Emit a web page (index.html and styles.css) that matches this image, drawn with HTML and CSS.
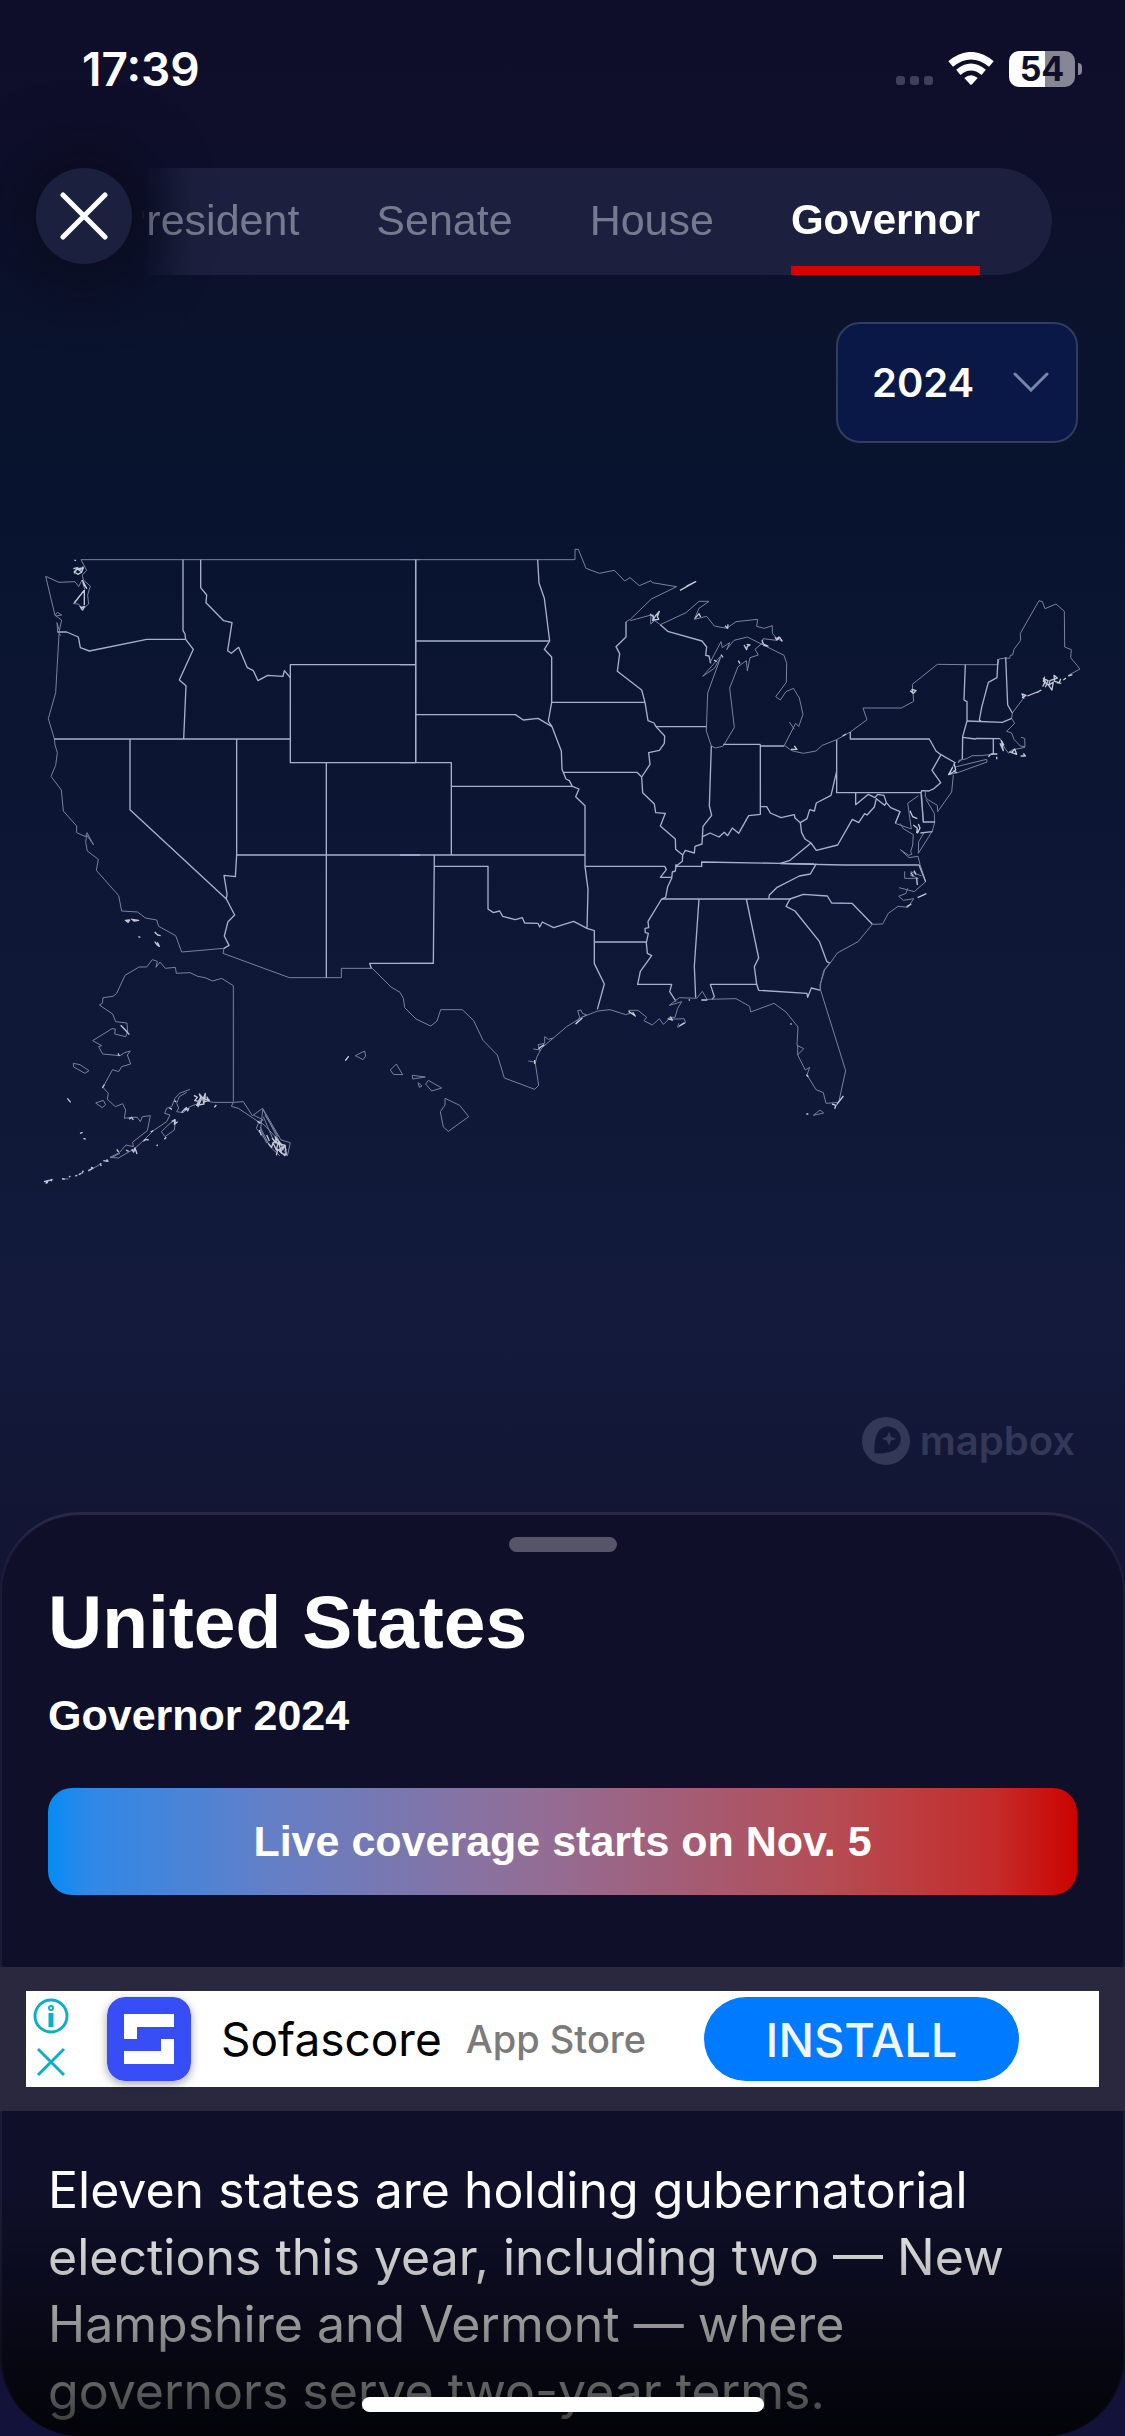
FILE: index.html
```html
<!DOCTYPE html>
<html lang="en">
<head>
    <meta charset="UTF-8">
    <meta name="viewport" content="width=device-width, initial-scale=1.0">
    <title>Election Results - Governor 2024</title>
    <link rel="stylesheet" href="styles.css">
</head>
<body>
    <div class="status-bar">
        <span class="clock">17:39</span>
        <div class="status-icons">
            <span class="signal"><i></i><i></i><i></i></span>
            <svg class="wifi" viewBox="0 0 138 100" aria-hidden="true">
                <g fill="none" stroke="#fff">
                    <path d="M8 36 Q69 -14 130 36" stroke-width="22"/>
                    <path d="M31 61 Q69 29 107 61" stroke-width="20"/>
                </g>
                <path d="M49 78 Q69 62 89 78 L72 97 Q69 100 66 97 Z" fill="#fff"/>
            </svg>
            <span class="battery">54</span>
        </div>
    </div>

    <!-- Race tabs -->
    <header class="header">
        <nav class="tabs">
            <a href="#president">President</a>
            <a href="#senate">Senate</a>
            <a href="#house">House</a>
            <a href="#governor" class="active">Governor</a>
        </nav>
        <button class="close" type="button" aria-label="Close">
            <svg viewBox="0 0 48 48"><path d="M3 3 L45 45 M45 3 L3 45"/></svg>
        </button>
    </header>

    <main class="map-area">
        <div class="year-picker">
            <select id="year" aria-label="Election year">
                <option>2024</option>
            </select>
            <svg viewBox="0 0 36 20" aria-hidden="true"><path d="M2 2 L18 18 L34 2"/></svg>
        </div>

        <svg class="us-map" viewBox="0 0 3375 2040" role="img" aria-label="Map of the United States">
            <!-- West -->
            <g transform="translate(60 0)">
                <g class="coast">
                    <path d="M183 89 H1200"/>
                    <path d="M183 89 L200 121 187 135 190 150 211 168 203 195 206 222 185 240 176 222 160 221 194 178 186 150 176 170 165 155 117 157 77 139 105 256 125 270 118 302 111 278 113 306"/>
                    <path d="M105 256 L112 247 125 255 108 258"/>
                    <path d="M113 306 L122 316 117 313 107 488 85 566 103 626 105 645 112 668 107 706 93 739 124 780 130 843 170 888 170 908 197 920 201 908 221 945 200 915 197 937 202 963 235 988 229 1021 296 1097 305 1143 353 1146 376 1164 410 1170 416 1189 467 1217 485 1266 612 1255 609 1270 808 1343 H964 V1315 H1057"/>
                </g>
                <g class="border">
                    <path d="M489 89 V302 L495 312 497 328"/>
                    <path d="M113 306 H140 L175 321 181 353 208 363 380 328 H497"/>
                    <path d="M497 328 L520 358 478 450 498 467 491 627"/>
                    <path d="M542 89 V173 L560 195 558 218 611 272 636 278 623 362 634 370 656 352 682 413 700 422 714 452 743 436 789 439 793 422 812 444"/>
                    <path d="M1187 404 H811 V698 H1187 M1187 89 V698"/>
                    <path d="M103 627 H811"/>
                    <path d="M330 627 V839 L619 1107"/>
                    <path d="M650 627 V975 L646 1040 612 1036 621 1092 619 1107 644 1155 624 1175 613 1218 627 1246 612 1255"/>
                    <path d="M650 975 H1200 M919 698 V1343"/>
                    <path d="M1240 1300 H1049 L1054 1315"/>
                </g>
                <g class="islands">
                    <path d="M163 90 l5 2 M160 116 l12 -3 8 6 9 -8 -4 16 -12 6 -10 -8 8 -9 14 10 5 -12 -18 2 -10 14 M187 150 L200 175 189 160 M193 180 V226 M163 219 L192 182 M180 228 l8 12 5 -10 -11 2"/>
                    <path d="M316 1171 l13 -1 -5 7 z M334 1166 l8 7 14 -2 -20 -3 M355 1220 l6 2 M404 1206 l9 9 9 2 M404 1235 l8 10 6 4 -6 -12"/>
                </g>
            </g>

            <!-- Plains and lakes -->
            <g transform="translate(1200 0)">
                <g class="coast">
                    <path d="M0 89 H525 V58 H535 L558 115 598 130 643 121 674 153 690 143 718 167 753 152 757 158 830 170 754 207 691 268 678 275"/>
                    <path d="M691 272 L753 255 752 282 764 272 781 284 858 248 897 214 H927 L897 235 883 268 920 259 943 288 980 295 1008 275 1073 268 1070 289 1093 295 1117 287 V310 L1130 325 1147 334 M1130 331 L1089 326 1085 344"/>
                    <path d="M980 358 L1002 331 1042 321 1152 376 1160 400 1159 457 1127 500 1141 510 1158 485 1180 475 1198 504 1209 553 1196 590 1187 580 1153 646"/>
                    <path d="M930 398 L963 335 967 353 989 338 980 360 M965 375 L908 439 943 415 962 382 923 489 919 603 934 648 947 654 970 648 1003 592 989 474 1014 410 1039 392 1042 423 1050 383 1075 375 1065 358 1086 340"/>
                </g>
                <g class="border">
                    <path d="M47 89 V698 M0 404 H47 M47 333 H449 M47 554 H346 L370 570 414 565 456 590"/>
                    <path d="M413 89 L417 159 433 205 449 333 433 358 455 381 V517 L445 573 456 590 484 663 486 718 498 747 508 752 517 769 537 777 527 800 555 827 V1009 L564 1078 561 1195 583 1202 V1301 L613 1362 592 1438"/>
                    <path d="M455 517 H735 M678 275 V321 L648 350 659 371 652 424 725 480 735 517 744 572 762 579 768 590 794 618 793 640 778 661 746 668 750 703 725 741 728 788 763 822 767 848 796 850 781 888 826 927 827 958 848 975 847 994 828 1009 826 1023 817 1026 815 1045 803 1070 797 1102 785 1107 744 1174 746 1193 735 1195 736 1208 745 1210 739 1238 742 1270 755 1277 721 1324 713 1363 H815 L809 1385 828 1414"/>
                    <path d="M781 284 L803 304 906 333 920 351 917 376 927 378 932 400"/>
                    <path d="M768 590 H919 M970 643 H1081 M1081 648 H1153"/>
                    <path d="M491 727 H711 L725 741 M0 698 H154 V975 M154 769 H517 M0 975 H555 M103 975 L100 1300 H0"/>
                    <path d="M103 1009 H264 V1137 L280 1148 299 1143 308 1159 346 1169 367 1163 374 1179 414 1180 419 1191 427 1176 461 1193 521 1174 561 1195"/>
                    <path d="M555 1009 H794 L799 1019 781 1042 H815 M585 1236 H739"/>
                    <path d="M934 648 L928 828 935 856 909 889 906 942 885 949 883 969 856 961 848 975"/>
                    <path d="M908 920 L930 909 957 921 973 907 983 917 997 894 1016 910 1046 857 1081 853 V643"/>
                    <path d="M828 1009 H905 V996 L1141 1000 1242 1002"/>
                    <path d="M785 1107 H1172 M897 1107 L883 1308 887 1403 M1039 1107 L1076 1284 1063 1310 1070 1363 1076 1381 1221 1390 1223 1402 1234 1374 1262 1381"/>
                    <path d="M1070 1363 H931 L943 1400 936 1408"/>
                </g>
                <g class="islands">
                    <path d="M840 181 L887 155 860 168 M750 252 l10 8 -2 12 8 -14 12 -14 -6 16 4 8 -14 2 -4 -16 M885 265 l12 -14 5 10 M975 287 l8 8 1 -12 M1032 345 l8 14 2 -10 8 -4 -10 -2 M1015 392 l5 9 M963 374 l6 8 M1125 322 l6 8 8 -8 8 12 M1086 330 l4 12 14 6 -14 -2 M942 390 l8 5 M828 1003 v8"/>
                </g>
            </g>

            <!-- East -->
            <g transform="translate(2220 0)">
                <g class="coast">
                    <path d="M133 646 L155 662 190 670 228 663 247 646 290 629 331 606 381 569 369 534 H484 L521 514 517 463 592 403 675 404 H774 L777 387 797 384"/>
                    <path d="M797 384 L809 385 811 376 818 375 822 358 842 331 841 310 897 212 907 215 915 236 948 222 973 244 974 351 994 359 992 383 1020 417 985 436 M848 508 L817 549 815 565 824 580 800 604 815 609 822 628 841 648 855 650 854 625 843 622"/>
                    <path d="M855 652 L815 660 806 670 795 655 781 627"/>
                    <path d="M760 673 L720 677 696 677 680 686 657 691 655 698 667 687 M645 711 L740 688 741 696 650 729 626 734 645 697 M640 735 L635 786 598 838 593 845 592 826 562 808 556 800 V785"/>
                    <path d="M558 808 L583 850 584 878 577 903 535 970 536 935 552 908 M545 793 L550 878 M535 797 L503 820 506 840 514 897 466 880 480 845 M480 880 L490 896 520 914 518 945 512 965 516 972 506 976 481 959 507 983 534 979 540 1003 557 1055 523 1085 477 1073 M503 1075 L498 1090 476 1099 490 1111 521 1106 504 1132 474 1129 445 1150 428 1182 397 1183 354 1235 292 1269 270 1300 254 1320 242 1360 240 1380"/>
                    <path d="M494 1024 V1045 L535 1045 510 1035 M512 1025 L545 1038"/>
                    <path d="M148 576 L163 598"/>
                </g>
                <g class="border">
                    <path d="M331 606 V627 H568 L588 663 603 674 576 721 602 758 583 775 567 783 545 782 543 789"/>
                    <path d="M603 674 L647 699 M290 629 V788 H543 L550 876 H585 M541 909 L577 905"/>
                    <path d="M676 404 L672 510 681 515 V573 L668 620 667 687"/>
                    <path d="M774 387 L771 443 745 457 725 532 718 570 724 575 M797 382 L803 525 817 549 M681 573 L787 577 815 565 M668 622 L706 627 710 625 781 626 M760 626 V672"/>
                    <path d="M290 724 L273 796 229 819 223 843 209 839 201 866 181 878 165 864 163 854 123 863 91 849 80 830 H61"/>
                    <path d="M181 878 L185 908 195 927 213 939 229 961 293 945 337 868 356 878 374 851 381 855 403 831 409 806 434 826 439 818 432 796 413 793 405 803 385 793 347 824 V789"/>
                    <path d="M439 818 L452 833 480 845 466 880 M213 939 L150 991 121 1000 M120 1001 L311 1005 H537 L557 1055"/>
                    <path d="M229 1001 L211 1032 178 1038 110 1073 88 1095 86 1107 M150 1107 L190 1093 262 1098 275 1119 336 1120 397 1183 M150 1107 L138 1129 165 1143 238 1234 260 1294 270 1300"/>
                </g>
                <g class="islands">
                    <path d="M846 504 l12 -8 -12 -4 6 14 M862 498 l30 -12 M890 488 l14 -8 M908 470 l8 -16 -6 -8 14 6 -8 20 M914 440 l-4 14 16 12 10 14 4 -24 -14 10 4 -14 22 -8 -10 -8 2 18 14 4 4 -12 M950 458 l14 2 M970 450 l8 -6 M985 438 l12 -4 M510 482 l10 8 8 -8 -12 -4 2 12 M308 618 l10 -6 M153 658 l18 0 -8 -10 M110 326 l8 -6"/>
                    <path d="M808 665 l22 8 -6 -16 -10 12 M842 678 l14 0 -6 -8 M770 680 v8 M745 680 l6 -6 M752 672 l20 0 M780 640 l10 22 -6 -30 8 14 M642 700 l5 20 -6 4 10 4 M638 712 l-12 22 14 -8 M533 1103 l26 -12 M500 1130 l14 -8 M535 882 l5 12 -8 16 M520 885 l12 10 -2 14 M510 842 l8 18 14 6 M530 1045 l2 20 M522 1022 l6 12 M512 1028 l8 10"/>
                </g>
            </g>

            <!-- Alaska -->
            <g transform="translate(60 1200)">
                <g class="coast">
                    <path d="M640 515 V167 L605 145 578 153 555 143 533 139 510 128 469 130 466 112 436 115 420 96 408 112 412 94 397 89 380 111 357 111 315 136 290 190 279 199 249 203 247 220 238 225 278 252 287 275 321 279 323 305 317 320 284 312 286 297 276 296 218 332 245 347 236 350 248 372 300 377 314 368 331 363 322 375 332 402 305 410 296 425 278 419 266 440 249 472 265 490 262 508 286 530 308 521 317 540 313 565 335 562 352 562 361 575 367 560 391 557 382 602 338 636 340 650 318 645 298 668 270 682 295 684 345 655 370 632 400 602 440 575 450 555 434 550 440 535 455 530 465 505 478 490 510 478"/>
                    <path d="M500 487 L478 500 470 520 476 534 470 545 490 548 510 530 530 522 M560 513 L580 517 640 517 670 515 697 557 728 535 783 630 811 638 802 678 785 648 728 537 M640 517 L634 529 655 535 715 575 730 570 700 555 M715 580 L709 595 745 640 M728 540 L722 600 740 640 M735 555 L775 620 M730 560 L760 630 785 650 M720 590 L750 650 780 678 M800 660 L770 625 738 590 720 575"/>
                    <path d="M160 400 L180 404 207 422 195 430 161 411 Z M227 519 L250 511 257 524 247 533 Z M424 605 L450 580 467 570 463 600 435 620 Z"/>
                    <path d="M272 684 L300 670 M205 724 L245 700 M126 746 L145 747"/>
                </g>
                <g class="islands">
                    <path d="M302 286 l14 14 12 14 M142 505 l10 12 M180 610 l8 -3 M190 626 l7 1 M433 628 l6 -6 M410 648 l3 -4 M583 532 l6 -7 M294 370 l4 8 M327 568 l8 -6 5 8 M247 474 l6 -10"/>
                    <path d="M522 496 l10 6 -8 10 14 2 -4 16 10 -22 -6 -16 12 14 6 -16 -2 26 14 -6 -20 -4 4 16 -22 4 12 -24 M560 500 l8 14 M485 548 l8 -10 8 -6 M492 540 l14 -4 -4 8 M463 512 l6 4 M448 534 l8 4 M455 575 l10 -6 -2 14 10 -8"/>
                    <path d="M745 640 l10 12 4 -14 10 22 6 -26 8 30 12 -18 4 28 -14 -4 -12 -12 -4 18 M756 625 l14 14 -4 -18 20 26 M740 615 l8 18 M712 574 l10 6 M718 600 l6 16 M760 636 l36 10 -20 14 20 18"/>
                    <path d="M370 634 l8 -6 8 2 M392 606 l8 -4 M335 658 l6 8 4 -12 6 18 M318 660 l8 4 M290 658 l6 8 M250 692 l14 2 -4 -6 M240 700 l4 8 M205 722 l14 -8 -6 -2 M186 730 l4 -8 M166 738 l6 -2 M176 734 l8 -4 M147 742 l4 -4 M126 746 l8 2 M72 755 l14 -4 -8 8 6 -2 M88 752 l8 -4 -2 6"/>
                </g>
            </g>

            <!-- Gulf, Florida and Hawaii -->
            <g transform="translate(1200 1200)">
                <g class="coast">
                    <path d="M-83 115 L-27 171 0 187 10 205 14 233 48 267 92 288 111 273 122 239 H187 L221 272 249 331 292 375 313 444 404 478 416 466 406 400 410 382 425 354 500 290 545 262 593 243 630 239 677 254 690 250 686 241 H714 L740 262 732 272 757 285 778 266 790 283 806 268 852 266 857 278 833 292 836 280"/>
                    <path d="M806 262 L825 262 833 235 845 215 808 226 838 203 890 205 907 184 921 208 1008 206 1049 229 1052 246 1122 220 1158 246 1194 291 1191 346 1211 356 1193 375 1216 420 1229 412 1221 435 1248 479 1270 488 1278 520 1316 517 1337 422 1262 181 1260 165 1272 120 1290 98"/>
                    <path d="M545 262 L560 255 547 250 543 240 533 242 539 262 526 283 M385 393 L405 396 M400 357 L420 360 414 344 434 340 434 320 445 328 460 324 M1193 375 L1193 346"/>
                    <path d="M-164 390 L-154 378 M-134 377 L-106 363 -103 378 -111 389 Z M-29 420 L-11 402 8 434 -20 433 Z M37 436 L76 441 38 447 Z M85 451 L125 474 95 483 77 462 Z M54 458 L66 468 58 472 Z M135 505 L179 526 206 560 145 604 130 591 121 545 135 525 Z M1240 556 L1260 540 1271 549 Z"/>
                </g>
                <g class="islands">
                    <path d="M-164 392 l10 -13 M404 402 v-12 M415 356 l18 -12 M527 282 l20 -18 M686 244 l20 14 -8 -12 M803 266 l14 4 -6 -10 M838 288 l16 -10 M1219 552 l6 0 M1296 522 l12 4 -4 10 M1310 524 l20 -26 M1171 281 l4 2 M866 210 h4 M904 210 h18 M1219 434 l6 6"/>
                </g>
            </g>
        </svg>

        <a class="mapbox" href="#mapbox">
            <svg viewBox="0 0 144 144" aria-hidden="true">
                <path fill-rule="evenodd" d="M72 0 A72 72 0 1 1 72 144 A72 72 0 1 1 72 0 Z M38 109 C36 82 39 62 48 45 C58 28 82 22 101 36 C120 50 122 77 105 93 C90 108 64 110 38 109 Z"/>
                <path d="M81 43 L87 59 103 65 87 71 81 87 75 71 59 65 75 59 Z"/>
            </svg>
            <span>mapbox</span>
        </a>
    </main>

    <!-- Bottom sheet -->
    <section class="sheet">
        <div class="handle"></div>
        <div class="summary">
            <h1>United States</h1>
            <h2>Governor 2024</h2>
            <button class="live" type="button">Live coverage starts on Nov. 5</button>
        </div>

        <div class="ad-band">
            <div class="ad">
                <div class="ad-controls">
                    <button type="button" aria-label="Ad info">
                        <svg viewBox="0 0 36 36"><circle cx="18" cy="18" r="16"/><path d="M18 15 V29" stroke-width="5"/><circle cx="18" cy="10" r="1" stroke-width="4"/></svg>
                    </button>
                    <button type="button" aria-label="Close ad">
                        <svg viewBox="0 0 36 36"><path d="M5 5 L31 31 M31 5 L5 31"/></svg>
                    </button>
                </div>
                <svg class="ad-logo" viewBox="0 0 84 84" aria-hidden="true">
                    <rect width="84" height="84" rx="18" fill="#374df5"/>
                    <path d="M17 17 H67 V30 H30 V42 H17 Z M67 67 H17 V54 H54 V42 H67 Z" fill="#fff"/>
                </svg>
                <span class="ad-name">Sofascore</span>
                <span class="ad-store">App Store</span>
                <button class="install" type="button">INSTALL</button>
            </div>
        </div>

        <p class="story">Eleven states are holding gubernatorial elections this year, including two — New Hampshire and Vermont — where governors serve two-year terms.</p>
    </section>

    <div class="home-indicator"></div>
</body>
</html>
```
FILE: styles.css
```css
* {
    box-sizing: border-box;
}

body {
    margin: 0;
    min-height: 100vh;
    display: flex;
    flex-direction: column;
    position: relative;
    font-family: "Liberation Sans", Arial, sans-serif;
    color: #fff;
    background: linear-gradient(#0f0e2a 0%, #0e0f2b 7%, #0b122c 12%, #08142f 20%, #0e1735 38%, #131a3c 54%, #121634 62%, #12123a 100%);
}

button {
    border: none;
    padding: 0;
    color: inherit;
    font: inherit;
    background: none;
    cursor: pointer;
}

a {
    color: inherit;
    text-decoration: none;
}

svg {
    display: block;
}

/* Status bar */
.status-bar {
    display: flex;
    justify-content: space-between;
    align-items: center;
    padding: 40px 44px 0 82px;
    height: 98px;
    font-family: Inter, sans-serif;
}

.clock {
    font-size: 46px;
    font-weight: 600;
}

.status-icons {
    display: flex;
    align-items: center;
    gap: 15px;
}

.signal {
    display: flex;
    gap: 5px;
    padding-top: 22px;
}

.signal i {
    width: 9px;
    height: 9px;
    border-radius: 3px;
    background: #403f57;
}

.wifi {
    width: 46px;
}

.battery {
    position: relative;
    width: 66px;
    height: 36px;
    margin-right: 6px;
    border-radius: 10px;
    background: linear-gradient(to right, #fff 54%, #878696 54%);
    color: #100f2b;
    font-size: 34px;
    font-weight: 700;
    line-height: 36px;
    text-align: center;
}

.battery::after {
    content: "";
    position: absolute;
    right: -7px;
    top: 12px;
    width: 4px;
    height: 12px;
    border-radius: 0 4px 4px 0;
    background: #878696;
}

/* Race tabs */
.header {
    position: relative;
    margin-top: 70px;
    padding: 0 73px 0 60px;
}

.tabs {
    display: flex;
    justify-content: flex-end;
    gap: 77px;
    height: 107px;
    padding-right: 72px;
    border-radius: 54px;
    font-size: 43px;
    color: #777a8e;
    background: linear-gradient(to right, transparent 76px, #1c203e 132px);
    -webkit-mask-image: linear-gradient(to right, transparent 82px, #000 90px);
    mask-image: linear-gradient(to right, transparent 82px, #000 90px);
}

.tabs a {
    line-height: 104px;
    border-bottom: 9px solid transparent;
}

.tabs .active {
    color: #fff;
    font-size: 42px;
    font-weight: bold;
    border-color: #d60000;
}

.close {
    position: absolute;
    left: 36px;
    top: 0;
    width: 96px;
    height: 96px;
    border-radius: 50%;
    display: grid;
    place-items: center;
    background: #1c203f;
    box-shadow: 0 0 60px 20px rgba(8, 8, 20, 0.5);
}

.close svg {
    width: 48px;
    fill: none;
    stroke: #fff;
    stroke-width: 5;
    stroke-linecap: round;
}

/* Map */
.map-area {
    padding-bottom: 47px;
}

.year-picker {
    position: relative;
    width: 242px;
    margin: 47px 47px 0 auto;
}

.year-picker select {
    width: 100%;
    height: 121px;
    padding: 0 34px;
    border: 2px solid #333b5e;
    border-radius: 24px;
    appearance: none;
    background: #0a1848;
    color: #fff;
    font-family: Inter, sans-serif;
    font-size: 40px;
    font-weight: 600;
}

.year-picker svg {
    position: absolute;
    right: 29px;
    top: 50px;
    width: 36px;
    fill: none;
    stroke: #7b84a6;
    stroke-width: 3;
    stroke-linecap: round;
    pointer-events: none;
}

.us-map {
    width: 100%;
    margin-top: 87px;
    fill: none;
    stroke-linejoin: round;
}

.coast {
    stroke: #7a819f;
    stroke-width: 3;
}

.border {
    stroke: #a9b0cb;
    stroke-width: 4;
}

.islands {
    stroke: #c4c9d8;
    stroke-width: 4;
}

.mapbox {
    display: flex;
    align-items: center;
    gap: 10px;
    width: max-content;
    margin: 207px 50px 0 auto;
    color: #343857;
    font-family: Inter, sans-serif;
    font-size: 40px;
    font-weight: 600;
    line-height: 48px;
}

.mapbox svg {
    width: 48px;
    fill: #343857;
}

/* Bottom sheet */
.sheet {
    position: relative;
    flex: 1;
    overflow: hidden;
    border-top: 3px solid #2a2945;
    border-radius: 80px;
    background: #0f0f29;
    box-shadow: inset 2px 0 #1d1c38, inset -2px 0 #1d1c38;
}

/* fades the story out towards the bottom edge */
.sheet::after {
    content: "";
    position: absolute;
    left: 0;
    right: 0;
    bottom: 0;
    height: 240px;
    background: linear-gradient(transparent, rgba(0, 0, 0, 0.45) 58%, rgba(0, 0, 0, 0.8));
    pointer-events: none;
}

.handle {
    width: 108px;
    height: 15px;
    margin: 22px auto 30px;
    border-radius: 8px;
    background: #555468;
}

.summary {
    padding: 0 48px;
}

h1 {
    margin: 0 0 27px;
    font-size: 75px;
    line-height: 80px;
}

h2 {
    margin: 0 0 47px;
    font-size: 43px;
    line-height: 52px;
}

.live {
    width: 100%;
    height: 107px;
    border-radius: 24px;
    font-size: 43px;
    font-weight: bold;
    background: linear-gradient(to right, #068cf4 0%, #2f88e8 4%, #647fc6 22%, #936d95 48%, #b54c54 76%, #c42c2a 92%, #cc0300 100%);
}

.ad-band {
    margin-top: 72px;
    padding: 24px 26px;
    background: #29283f;
}

.ad {
    display: flex;
    align-items: center;
    height: 96px;
    background: #fff;
    color: #000;
    font-family: Inter, sans-serif;
}

.ad-controls {
    display: flex;
    flex-direction: column;
    gap: 10px;
    margin: 0 38px 0 7px;
}

.ad-controls svg {
    width: 36px;
    fill: none;
    stroke: #0fadc6;
    stroke-width: 3;
}

.ad-logo {
    width: 84px;
    border-radius: 18px;
    box-shadow: 0 3px 10px rgba(0, 0, 0, 0.35);
}

.ad-name {
    margin-left: 30px;
    font-size: 46px;
}

.ad-store {
    margin-left: 24px;
    color: #7b7b7b;
    font-size: 38px;
    font-weight: 500;
}

.install {
    width: 315px;
    height: 84px;
    margin: 0 80px 0 auto;
    border-radius: 42px;
    background: #007aff;
    color: #f1f5fd;
    font-size: 47px;
    font-weight: 500;
}

.story {
    margin: 46px 48px 0;
    font-family: Inter, sans-serif;
    font-size: 50px;
    line-height: 67px;
}

.home-indicator {
    position: absolute;
    left: 50%;
    bottom: 24px;
    width: 402px;
    height: 15px;
    margin-left: -201px;
    border-radius: 8px;
    background: #fff;
}
```
